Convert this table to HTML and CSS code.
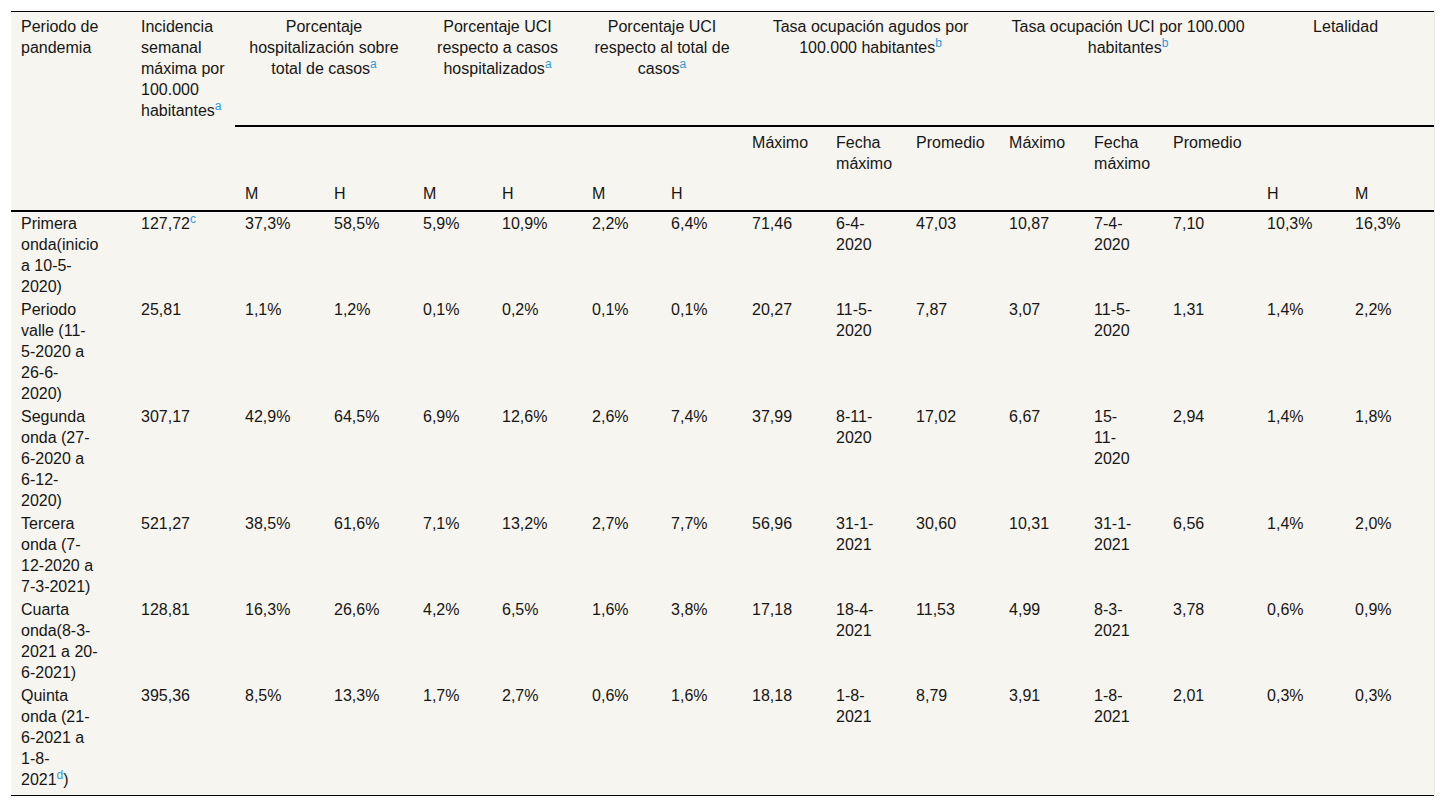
FILE: index.html
```html
<!DOCTYPE html>
<html lang="es">
<head>
<meta charset="utf-8">
<title>Tabla periodos de pandemia</title>
<link rel="stylesheet" href="styles.css">
</head>
<body>
<div class="wrap">
<table class="data">
<colgroup>
<col class="c120"><col class="c104"><col class="c89"><col class="c89"><col class="c79"><col class="c90"><col class="c79"><col class="c81"><col class="c84"><col class="c80"><col class="c93"><col class="c85"><col class="c79"><col class="c94"><col class="c88"><col class="c89">
</colgroup>
<thead>
<tr class="h1">
<th class="lead" rowspan="3">Periodo de<br>pandemia</th>
<th class="lead" rowspan="3">Incidencia<br>semanal<br>máxima por<br>100.000<br>habitantes<sup class="ref">a</sup></th>
<th class="grp" colspan="2">Porcentaje<br>hospitalización sobre<br>total de casos<sup class="ref">a</sup></th>
<th class="grp" colspan="2">Porcentaje UCI<br>respecto a casos<br>hospitalizados<sup class="ref">a</sup></th>
<th class="grp" colspan="2">Porcentaje UCI<br>respecto al total de<br>casos<sup class="ref">a</sup></th>
<th class="grp" colspan="3">Tasa ocupación agudos por<br>100.000 habitantes<sup class="ref">b</sup></th>
<th class="grp" colspan="3">Tasa ocupación UCI por 100.000<br>habitantes<sup class="ref">b</sup></th>
<th class="grp" colspan="2">Letalidad</th>
</tr>
<tr class="h2">
<th></th><th></th><th></th><th></th><th></th><th></th>
<th>Máximo</th><th>Fecha<br>máximo</th><th>Promedio</th>
<th>Máximo</th><th>Fecha<br>máximo</th><th>Promedio</th>
<th></th><th></th>
</tr>
<tr class="h3">
<th>M</th><th>H</th><th>M</th><th>H</th><th>M</th><th>H</th>
<th></th><th></th><th></th><th></th><th></th><th></th>
<th>H</th><th>M</th>
</tr>
</thead>
<tbody>
<tr>
<td>Primera<br>onda(inicio<br>a 10-5-<br>2020)</td><td>127,72<sup class="ref">c</sup></td>
<td>37,3%</td><td>58,5%</td><td>5,9%</td><td>10,9%</td><td>2,2%</td><td>6,4%</td>
<td>71,46</td><td>6-4-<br>2020</td><td>47,03</td><td>10,87</td><td>7-4-<br>2020</td><td>7,10</td>
<td>10,3%</td><td>16,3%</td>
</tr>
<tr>
<td>Periodo<br>valle (11-<br>5-2020 a<br>26-6-<br>2020)</td><td>25,81</td>
<td>1,1%</td><td>1,2%</td><td>0,1%</td><td>0,2%</td><td>0,1%</td><td>0,1%</td>
<td>20,27</td><td>11-5-<br>2020</td><td>7,87</td><td>3,07</td><td>11-5-<br>2020</td><td>1,31</td>
<td>1,4%</td><td>2,2%</td>
</tr>
<tr>
<td>Segunda<br>onda (27-<br>6-2020 a<br>6-12-<br>2020)</td><td>307,17</td>
<td>42,9%</td><td>64,5%</td><td>6,9%</td><td>12,6%</td><td>2,6%</td><td>7,4%</td>
<td>37,99</td><td>8-11-<br>2020</td><td>17,02</td><td>6,67</td><td>15-<br>11-<br>2020</td><td>2,94</td>
<td>1,4%</td><td>1,8%</td>
</tr>
<tr>
<td>Tercera<br>onda (7-<br>12-2020 a<br>7-3-2021)</td><td>521,27</td>
<td>38,5%</td><td>61,6%</td><td>7,1%</td><td>13,2%</td><td>2,7%</td><td>7,7%</td>
<td>56,96</td><td>31-1-<br>2021</td><td>30,60</td><td>10,31</td><td>31-1-<br>2021</td><td>6,56</td>
<td>1,4%</td><td>2,0%</td>
</tr>
<tr>
<td>Cuarta<br>onda(8-3-<br>2021 a 20-<br>6-2021)</td><td>128,81</td>
<td>16,3%</td><td>26,6%</td><td>4,2%</td><td>6,5%</td><td>1,6%</td><td>3,8%</td>
<td>17,18</td><td>18-4-<br>2021</td><td>11,53</td><td>4,99</td><td>8-3-<br>2021</td><td>3,78</td>
<td>0,6%</td><td>0,9%</td>
</tr>
<tr class="last">
<td>Quinta<br>onda (21-<br>6-2021 a<br>1-8-<br>2021<sup class="ref">d</sup>)</td><td>395,36</td>
<td>8,5%</td><td>13,3%</td><td>1,7%</td><td>2,7%</td><td>0,6%</td><td>1,6%</td>
<td>18,18</td><td>1-8-<br>2021</td><td>8,79</td><td>3,91</td><td>1-8-<br>2021</td><td>2,01</td>
<td>0,3%</td><td>0,3%</td>
</tr>
</tbody>
</table>
</div>
</body>
</html>
```

FILE: styles.css
```css
html, body {
  margin: 0;
  padding: 0;
  background: #ffffff;
}

.wrap {
  padding: 11px;
}

.data {
  width: 100%;
  table-layout: fixed;
  border-collapse: separate;
  border-spacing: 0;
  background: #f7f5ef;
  border-top: 1px solid #000;
  border-bottom: 1px solid #000;
  box-shadow: 1px 0 0 #e9e9e9;
  font-family: "Liberation Sans", Arial, sans-serif;
  font-size: 16px;
  line-height: 21px;
  color: #161616;
}

.c120 { width: 120px; }
.c104 { width: 104px; }
.c89 { width: 89px; }
.c90 { width: 90px; }
.c79 { width: 79px; }
.c80 { width: 80px; }
.c81 { width: 81px; }
.c84 { width: 84px; }
.c85 { width: 85px; }
.c88 { width: 88px; }
.c93 { width: 93px; }
.c94 { width: 94px; }

.data th,
.data td {
  font-weight: normal;
  text-align: left;
  vertical-align: top;
  white-space: nowrap;
  padding: 1px 0 1px 10px;
}

.h1 {
  height: 113px;
}

.h1 th {
  padding-top: 4px;
  padding-bottom: 4px;
}

.h1 th.grp {
  text-align: center;
  padding-left: 0;
}

.h2 th {
  border-top: 2px solid #000;
  padding-top: 5px;
  padding-bottom: 4px;
}

.h3 th {
  padding-top: 5px;
  padding-bottom: 6px;
  border-bottom: 2px solid #000;
}

.h1 th.lead {
  border-bottom: 2px solid #000;
}

.last td {
  padding-bottom: 5px;
}

.ref {
  color: #2d9bd9;
  font-size: 12px;
  line-height: 0;
  vertical-align: 6px;
}
```
